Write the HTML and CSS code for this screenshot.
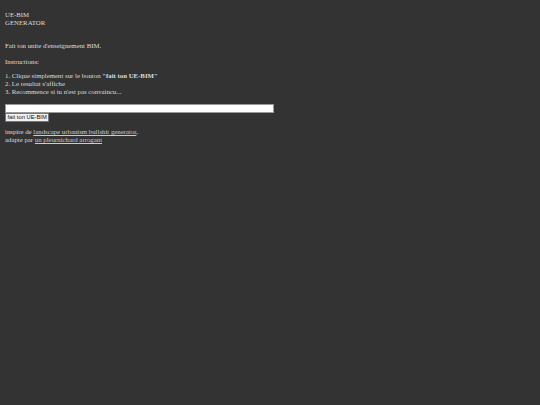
FILE: index.html
```html
<!DOCTYPE html>
<html>
<head>
<meta charset="utf-8">
<link rel="stylesheet" href="styles.css">
</head>
<body>
<div class="page">
  <div class="title">UE-BIM<br>GENERATOR</div>
  <p class="intro">Fait ton unite d'enseignement BIM.</p>
  <p class="label">Instructions:</p>
  <div class="steps">
    1. Clique simplement sur le bouton <b>"fait ton UE-BIM"</b><br>
    2. Le resultat s'affiche<br>
    3. Recommence si tu n'est pas convaincu...
  </div>
  <div class="form">
    <input class="result" type="text">
    <button class="btn">fait ton UE-BIM</button>
  </div>
  <div class="credits">
    inspire de <a href="#">landscape urbanism bullshit generator</a>,<br>
    adapte par <a href="#">un pleurnichard arrogant</a>
  </div>
</div>
</body>
</html>
```
FILE: styles.css
```css
html, body {
  margin: 0;
  padding: 0;
  background: #333333;
}
body {
  color: #dddddd;
  font-family: "Liberation Serif", serif;
  font-size: 6.8px;
  line-height: 8px;
}
.page {
  padding: 11px 5px;
}
.title {
  margin: 0;
}
.intro {
  margin: 15px 0 0;
}
.label {
  margin: 8px 0 0;
}
.steps {
  margin-top: 6px;
}
.steps b {
  font-weight: 600;
}
.form {
  margin-top: 8px;
  display: flex;
  flex-direction: column;
  align-items: flex-start;
}
.result {
  box-sizing: border-box;
  width: 269px;
  height: 9px;
  margin: 0;
  padding: 0;
  border: 1px solid #999;
  background: #fff;
}
.btn {
  box-sizing: border-box;
  height: 9px;
  margin: 0;
  padding: 0 1.5px;
  font-family: "Liberation Sans", sans-serif;
  font-size: 5.8px;
  line-height: 7px;
  color: #111;
  background: #f0f0f0;
  border: 1px solid #767676;
  border-radius: 1px;
}
.credits {
  margin-top: 6px;
}
.credits a {
  color: #cccccc;
}
```
